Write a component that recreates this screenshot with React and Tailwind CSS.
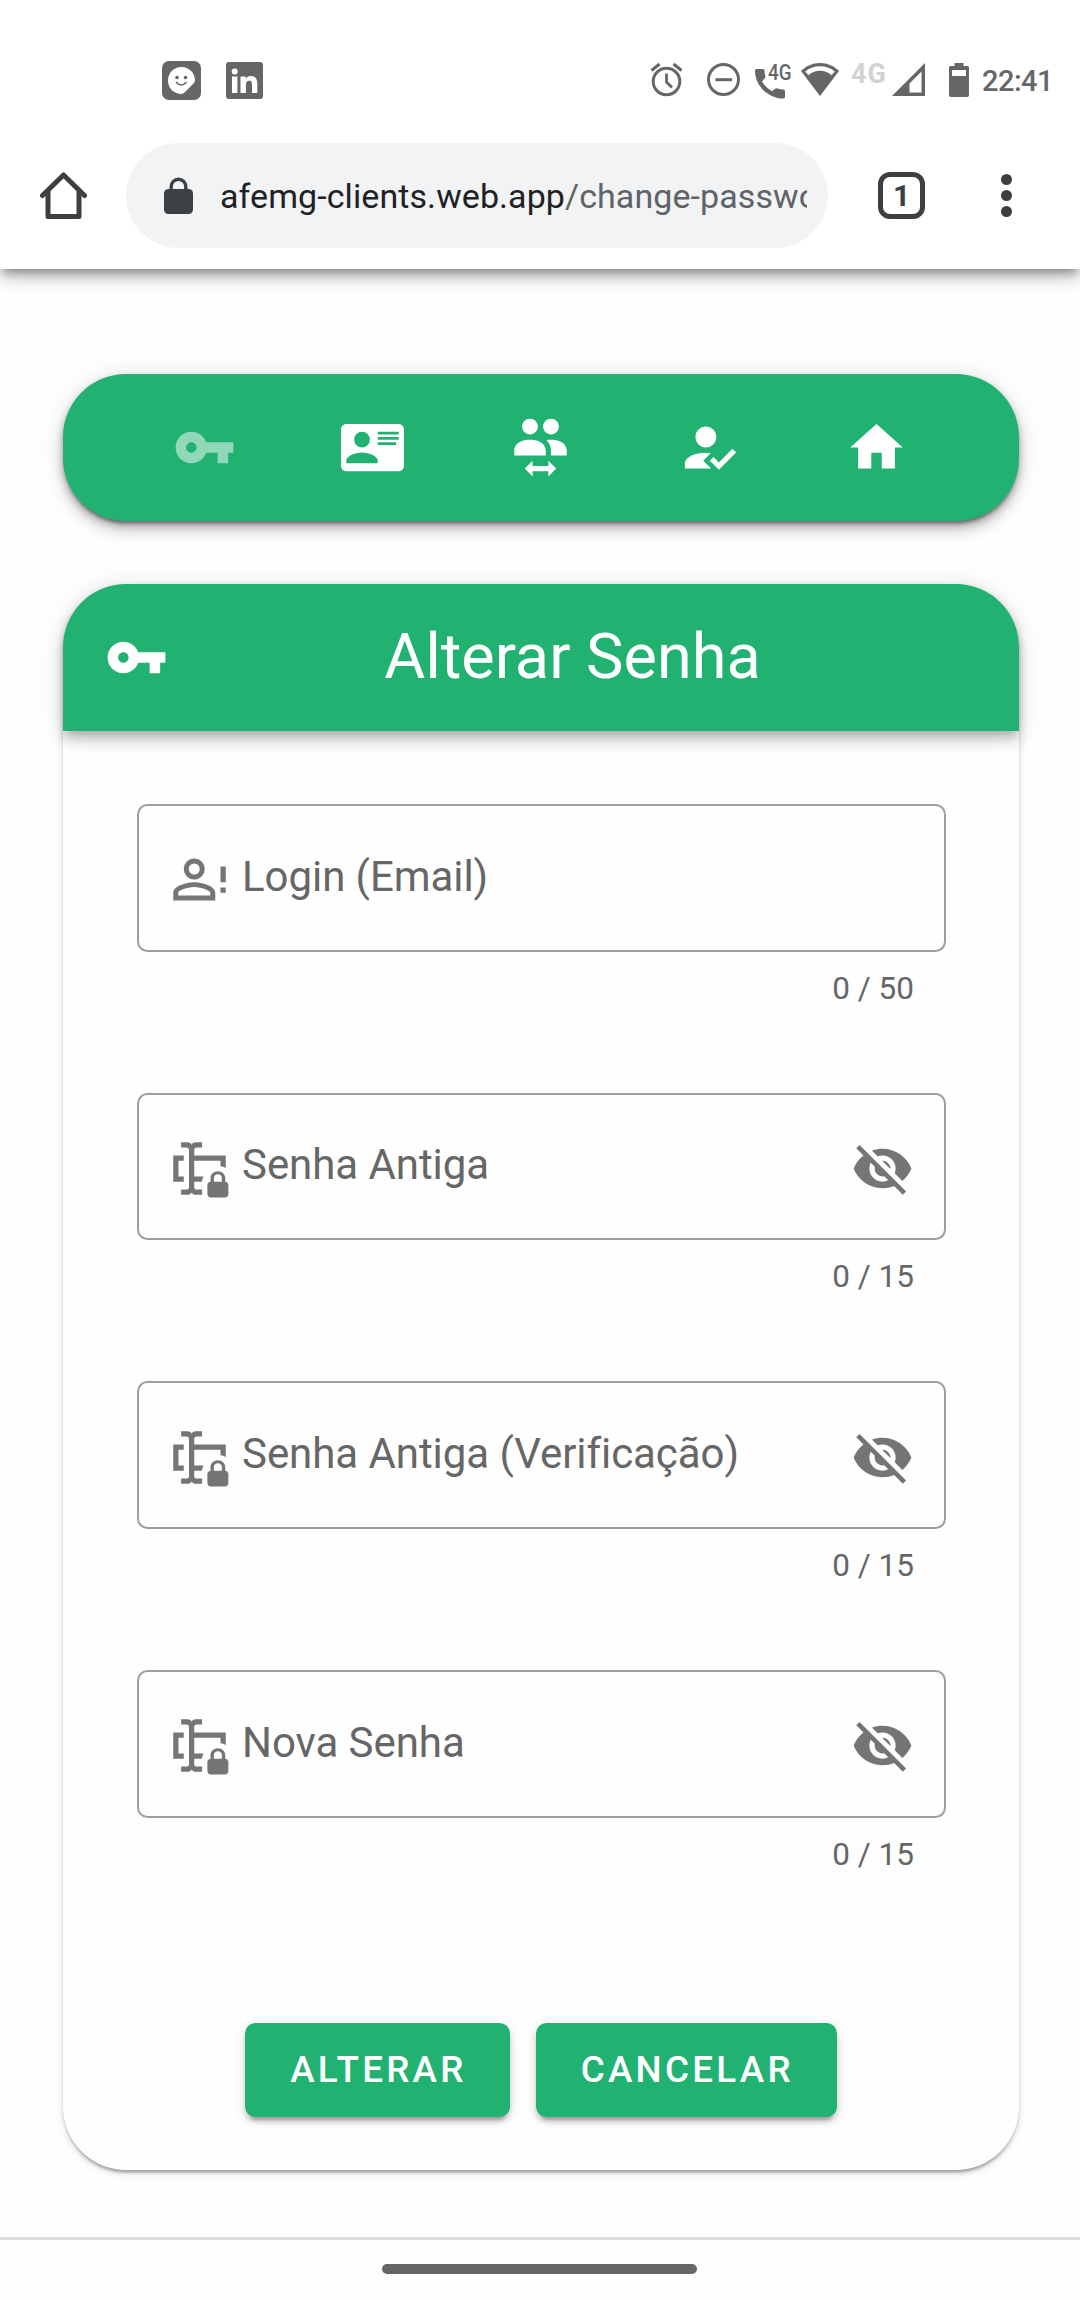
const paths = {
  key: "M12.65 10C11.83 7.67 9.61 6 7 6c-3.31 0-6 2.69-6 6s2.69 6 6 6c2.61 0 4.83-1.67 5.65-4H17v4h4v-4h2v-4H12.65zM7 14c-1.1 0-2-.9-2-2s.9-2 2-2 2 .9 2 2-.9 2-2 2z",
  card: "M2,3H22C23.05,3 24,3.95 24,5V19C24,20.05 23.05,21 22,21H2C0.95,21 0,20.05 0,19V5C0,3.95 0.95,3 2,3M14,6V7H22V6H14M14,8V9H21.5L22,9V8H14M14,10V11H21V10H14M8,13.91C6,13.91 2,15 2,17V18H14V17C14,15 10,13.91 8,13.91M8,6A3,3 0 0,0 5,9A3,3 0 0,0 8,12A3,3 0 0,0 11,9A3,3 0 0,0 8,6Z",
  accounts: "M16 9C22 9 22 13 22 13V15H16V13C16 13 16 11.31 14.85 9.8C14.68 9.57 14.47 9.35 14.25 9.14C14.77 9.06 15.34 9 16 9M2 13C2 13 2 9 8 9S14 13 14 13V15H2V13M9 17V19H15V17L18 20L15 23V21H9V23L6 20L9 17M8 1C6.34 1 5 2.34 5 4S6.34 7 8 7 11 5.66 11 4 9.66 1 8 1M16 1C14.34 1 13 2.34 13 4S14.34 7 16 7 19 5.66 19 4 17.66 1 16 1Z",
  accountCheck: "M21.1,12.5L22.5,13.91L15.97,20.5L12.5,17L13.9,15.59L15.97,17.67L21.1,12.5M10,17L13,20H3V18C3,15.79 6.58,14 11,14L12.89,14.11L10,17M11,4A4,4 0 0,1 15,8A4,4 0 0,1 11,12A4,4 0 0,1 7,8A4,4 0 0,1 11,4Z",
  home: "M10,20V14H14V20H19V12H22L12,3L2,12H5V20H10Z",
  accountAlert: "M20 12V7H22V13H20M20 17H22V15H20M10 13C12.67 13 18 14.34 18 17V20H2V17C2 14.34 7.33 13 10 13M10 4A4 4 0 0 1 14 8A4 4 0 0 1 10 12A4 4 0 0 1 6 8A4 4 0 0 1 10 4M10 14.9C7.03 14.9 3.9 16.36 3.9 17V18.1H16.1V17C16.1 16.36 12.97 14.9 10 14.9M10 5.9A2.1 2.1 0 0 0 7.9 8A2.1 2.1 0 0 0 10 10.1A2.1 2.1 0 0 0 12.1 8A2.1 2.1 0 0 0 10 5.9Z",
  textboxLock: "M10 7H22V11.8C21.5 11.4 20.8 11.2 20 11.1V9H10V15H13.6C13.2 15.6 13 16.3 12.9 17H10V19A1 1 0 0 0 11 20H13V22H10.5C9.95 22 9 21.55 9 21C9 21.55 8.05 22 7.5 22H5V20H7A1 1 0 0 0 8 19V5A1 1 0 0 0 7 4H5V2H7.5C8.05 2 9 2.45 9 3C9 2.45 9.95 2 10.5 2H13V4H11A1 1 0 0 0 10 5V7M2 7H6V9H4V15H6V17H2V7M21.8 17V15.5C21.8 14.1 20.4 13 19 13S16.2 14.1 16.2 15.5V17C15.6 17 15 17.6 15 18.2V21.7C15 22.4 15.6 23 16.2 23H21.7C22.4 23 23 22.4 23 21.8V18.3C23 17.6 22.4 17 21.8 17M20.5 17H17.5V15.5C17.5 14.7 18.2 14.2 19 14.2S20.5 14.7 20.5 15.5V17Z",
  eyeOff: "M11.83,9L15,12.16C15,12.11 15,12.05 15,12A3,3 0 0,0 12,9C11.94,9 11.89,9 11.83,9M7.53,9.8L9.08,11.35C9.03,11.56 9,11.77 9,12A3,3 0 0,0 12,15C12.22,15 12.44,14.97 12.65,14.92L14.2,16.47C13.53,16.8 12.79,17 12,17A5,5 0 0,1 7,12C7,11.21 7.2,10.47 7.53,9.8M2,4.27L4.28,6.55L4.73,7C3.08,8.3 1.78,10 1,12C2.73,16.39 7,19.5 12,19.5C13.55,19.5 15.03,19.2 16.38,18.66L16.81,19.08L19.73,22L21,20.73L3.27,3M12,7A5,5 0 0,1 17,12C17,12.64 16.87,13.26 16.64,13.82L19.57,16.75C21.07,15.5 22.27,13.86 23,12C21.27,7.61 17,4.5 12,4.5C10.6,4.5 9.26,4.75 8,5.2L10.17,7.35C10.74,7.13 11.35,7 12,7Z",
};

function Icon({ name, className = "" }) {
  return (
    <svg viewBox="0 0 24 24" fill="currentColor" fillRule="nonzero" className={`size-[63px] shrink-0 ${className}`}>
      <path d={paths[name]} />
    </svg>
  );
}

function StatusBar() {
  return (
    <div className="flex h-[143px] items-start pt-[60px] text-[#666]">
      <svg className="ml-[162px] mt-px h-[39px] w-[39px] shrink-0" viewBox="0 0 39 39">
        <rect width="39" height="39" rx="7" fill="#666" />
        <path d="M19.5 6C12 6 6 11.800 6 19.500C6 27 11.500 32.500 19 33C20.500 33 21.800 32.300 23 31L31.500 22.500C32.500 21.300 33 20.500 33 19C32.600 11.500 27 6 19.500 6Z" fill="#fff" />
        <circle cx="15" cy="16.500" r="1.800" fill="#666" />
        <circle cx="23.500" cy="16.500" r="1.800" fill="#666" />
        <path d="M14.500 21.500Q19.300 26.500 24 21.500" stroke="#666" strokeWidth="1.700" fill="none" strokeLinecap="round" />
      </svg>
      <svg className="ml-[25px] mt-[2px] h-[37px] w-[37px] shrink-0" viewBox="0 0 37 37">
        <rect width="37" height="37" rx="3" fill="#666" />
        <circle cx="8.700" cy="9.600" r="3" fill="#fff" />
        <rect x="6" y="14.500" width="5.400" height="16.500" fill="#fff" />
        <path d="M14.500 14.500H19.600V16.700C20.600 15 22.500 14.100 24.800 14.100C30 14.100 31.300 17.300 31.300 22V31H26V23C26 20.800 25.700 18.700 23.200 18.700C20.600 18.700 19.900 20.600 19.900 23V31H14.500Z" fill="#fff" />
      </svg>
      <svg className="ml-[387px] mt-[2px] h-9 w-[34px] shrink-0" viewBox="0 0 34 36" fill="none" stroke="#666">
        <circle cx="16.500" cy="19.500" r="13.300" strokeWidth="3" />
        <path d="M16.500 11.500V20L22 25.500" strokeWidth="2.800" />
        <path d="M1.500 8.500L9.500 2M31.500 8.500L23.500 2" strokeWidth="3" />
      </svg>
      <svg className="ml-[23px] mt-[3px] h-[34px] w-[34px] shrink-0" viewBox="0 0 34 34" fill="none" stroke="#666" strokeWidth="3">
        <circle cx="16.500" cy="16.500" r="15" />
        <path d="M8.500 16.700H25" />
      </svg>
      <div className="relative ml-[13px] h-10 w-[40px] shrink-0">
        <svg className="absolute left-px top-[9px] h-[30px] w-[31px]" viewBox="0 0 31 30" fill="#666">
          <path d="M1.500 0H8Q9.500 0 9.500 1.500Q9.500 4.500 10.300 7Q10.600 8.300 9.800 9.200L7 12.500Q10.600 18.500 17 22.300L20 19.700Q21 19 22.200 19.400Q25 20.300 28.500 20.500Q30 20.600 30 22V28Q30 29.500 28.500 29.500C14 29.500 0 17.500 0 1.500Q0 0 1.500 0Z" />
        </svg>
        <span className="absolute left-[14px] top-0 origin-left scale-x-[.84] text-[22.500px] leading-[25px] font-medium">4G</span>
      </div>
      <svg className="ml-[7px] mt-[3px] h-[33px] w-[38px] shrink-0" viewBox="0 0 38 33">
        <path d="M19 0C11.500 0 5 3 0 8L19 33L38 8C33 3 26.500 0 19 0Z" fill="#666" />
        <path d="M19 3.200C13 3.200 8 5.200 4.200 8.600L7.500 12.300C10.500 9.300 14.500 7.700 19 7.700S27.500 9.300 30.500 12.300L33.800 8.600C30 5.200 25 3.200 19 3.200Z" fill="#fff" />
      </svg>
      <span className="ml-[12px] mt-px w-[36px] shrink-0 whitespace-nowrap text-[27px] leading-[27px] font-bold tracking-[1px] text-[#d2d2d2]">4G</span>
      <svg className="ml-[5px] mt-[3px] h-[33px] w-[33px] shrink-0" viewBox="0 0 33 33">
        <path d="M33 0V33H0Z" fill="#666" />
        <path d="M29.500 8.500V29.500H17.500V20.500Z" fill="#fff" />
      </svg>
      <svg className="ml-6 mt-[3px] h-[34px] w-5 shrink-0" viewBox="0 0 20 34">
        <path d="M5.500 0H14.500V3H18.500Q20 3 20 4.500V32Q20 34 18 34H2Q0 34 0 32V4.500Q0 3 1.500 3H5.500Z" fill="#666" />
        <rect x="3" y="7" width="14" height="6" fill="#fff" />
      </svg>
      <span className="ml-[13px] mt-[4px] text-[29px] leading-[34px] font-medium tracking-[-0.500px]">22:41</span>
    </div>
  );
}

function BrowserBar() {
  return (
    <div className="flex h-[126px] items-start text-[#3c4043]">
      <svg className="ml-10 mt-[29px] h-[47px] w-[47px] shrink-0" viewBox="0 0 47 47" fill="none" stroke="#3c4043" strokeWidth="5" strokeLinecap="round" strokeLinejoin="round">
        <path d="M2.500 23.500L23.500 3L44.500 23.500" />
        <path d="M8 19V44.500H39V19" />
      </svg>
      <div className="ml-[39px] flex h-[105px] w-[702px] items-center rounded-full bg-[#f1f3f4] pl-[38px] pr-[21px]">
        <svg className="h-[37px] w-[29px] shrink-0" viewBox="0 0 29 37">
          <rect y="12" width="29" height="25" rx="4.500" fill="#3c4043" />
          <path d="M7.200 14V9.500A7.300 7.300 0 0 1 21.800 9.500V14" fill="none" stroke="#3c4043" strokeWidth="3.400" />
        </svg>
        <div className="ml-[27px] overflow-hidden whitespace-nowrap text-[34px] leading-[44px] tracking-[0.080px] text-[#5f6368]">
          <span className="text-[#202124]">afemg-clients.web.app</span>/change-password
        </div>
      </div>
      <div className="ml-[50px] mt-[29px] flex h-[47px] w-[47px] shrink-0 items-center justify-center rounded-[12px] border-[5px] border-[#3c4043] text-[30px] leading-none font-bold">1</div>
      <div className="ml-[76px] mt-[31px] flex flex-col gap-[5px]">
        <i className="size-[11px] rounded-full bg-[#3c4043]" />
        <i className="size-[11px] rounded-full bg-[#3c4043]" />
        <i className="size-[11px] rounded-full bg-[#3c4043]" />
      </div>
    </div>
  );
}

const fields = [
  { label: "Login (Email)", icon: "accountAlert", max: 50, secret: false },
  { label: "Senha Antiga", icon: "textboxLock", max: 15, secret: true },
  { label: "Senha Antiga (Verificação)", icon: "textboxLock", max: 15, secret: true },
  { label: "Nova Senha", icon: "textboxLock", max: 15, secret: true },
];

function Field({ label, icon, max, secret }) {
  return (
    <div className="h-[288.700px]">
      <div className="flex h-[147.500px] items-center rounded-[10.500px] border-2 border-[#9e9e9e] pl-[29px] pr-[30px] text-[#757575]">
        <Icon name={icon} className="mt-[4px]" />
        <span className="ml-[11px] -mt-[2px] flex-1 text-[42px] leading-[50px] tracking-[-0.060px] text-[#666]">{label}</span>
        {secret && <Icon name="eyeOff" className="mt-[4px]" />}
      </div>
      <div className="mt-[17px] pr-[32px] text-right text-[31.500px] leading-[40px] text-[#666]">0 / {max}</div>
    </div>
  );
}

function Button({ children }) {
  return (
    <button className="h-[94px] rounded-[10.500px] bg-[#21b272] pl-[45px] pr-[43px] text-[36.750px] leading-[94px] font-medium tracking-[3.280px] text-white shadow-[0_8px_3px_-5px_rgba(0,0,0,.2),0_5px_5px_0_rgba(0,0,0,.14),0_3px_13px_0_rgba(0,0,0,.12)]">
      {children}
    </button>
  );
}

export default function App() {
  return (
    <div className="flex h-[2300px] w-[1080px] flex-col overflow-hidden bg-[#fefefe] font-[Roboto,sans-serif]">
      <header className="h-[269px] shrink-0 bg-white shadow-[0_5px_10px_-3px_rgba(0,0,0,.4),0_10px_13px_0_rgba(0,0,0,.14),0_3px_26px_0_rgba(0,0,0,.12)]">
        <StatusBar />
        <BrowserBar />
      </header>

      <nav className="ml-[63px] mt-[105px] flex h-[147px] w-[956px] shrink-0 items-center justify-center gap-[105px] rounded-[63px] bg-[#21b272] pr-px text-white shadow-[0_5px_3px_-3px_rgba(0,0,0,.2),0_3px_3px_0_rgba(0,0,0,.14),0_3px_8px_0_rgba(0,0,0,.12),0_5px_10px_-3px_rgba(0,0,0,.2),0_10px_13px_0_rgba(0,0,0,.14),0_3px_26px_0_rgba(0,0,0,.12)]">
        <Icon name="key" className="opacity-50" />
        <Icon name="card" />
        <Icon name="accounts" />
        <Icon name="accountCheck" />
        <Icon name="home" />
      </nav>

      <main className="ml-[63px] mt-[63px] h-[1586px] w-[956px] shrink-0 rounded-[63px] shadow-[0_5px_3px_-3px_rgba(0,0,0,.2),0_3px_3px_0_rgba(0,0,0,.14),0_3px_8px_0_rgba(0,0,0,.12)]">
        <div className="flex h-[147px] items-center rounded-t-[63px] bg-[#21b272] px-[42px] text-white shadow-[0_5px_10px_-3px_rgba(0,0,0,.2),0_10px_13px_0_rgba(0,0,0,.14),0_3px_26px_0_rgba(0,0,0,.12)]">
          <Icon name="key" />
          <h1 className="-mt-[2px] flex-1 text-center text-[63px] leading-[80px] font-normal">Alterar Senha</h1>
        </div>
        <div className="pl-[74px] pr-[73px] pt-[73px]">
          {fields.map((f) => (
            <Field key={f.label} {...f} />
          ))}
        </div>
        <div className="mt-[64px] flex justify-center gap-[26px]">
          <Button>ALTERAR</Button>
          <Button>CANCELAR</Button>
        </div>
      </main>

      <footer className="mt-[67px] flex flex-1 justify-center border-t-[3px] border-[#dcdce1] pr-px pt-6">
        <div className="h-[10px] w-[315px] rounded-full bg-[#666]" />
      </footer>
    </div>
  );
}
